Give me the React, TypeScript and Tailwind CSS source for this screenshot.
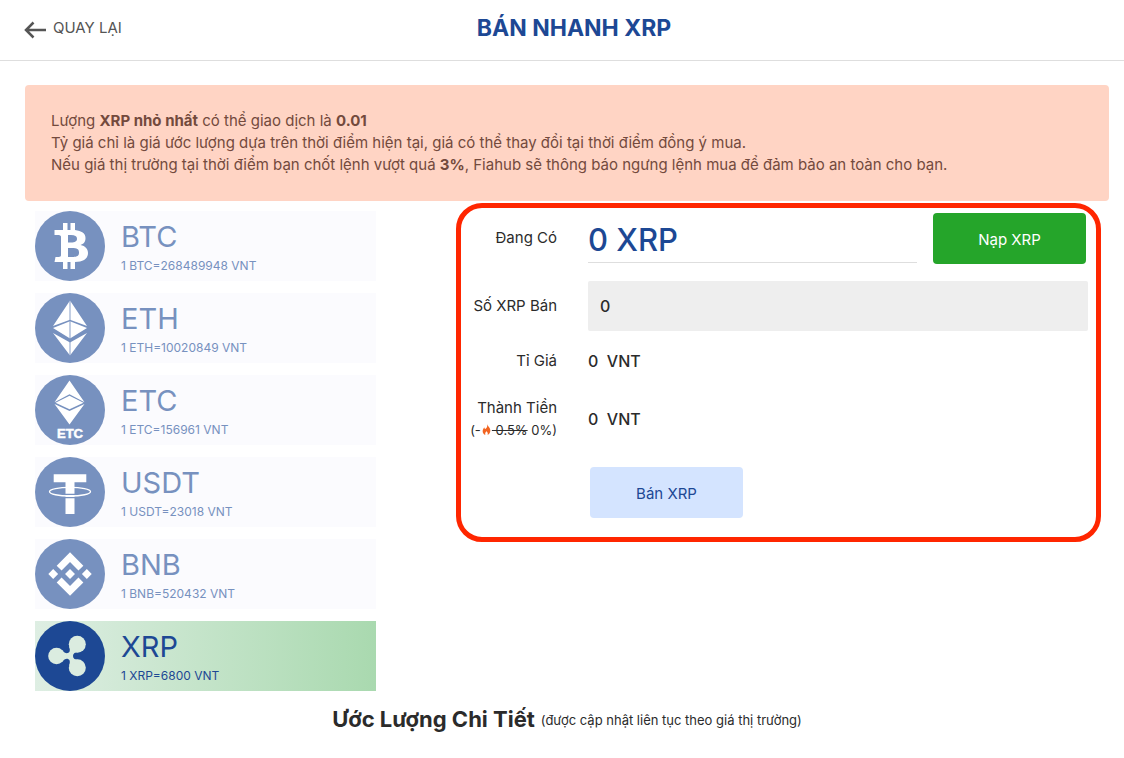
import type { ReactNode } from "react";

const coins = [
  { symbol: "BTC", rate: "1 BTC=268489948 VNT" },
  { symbol: "ETH", rate: "1 ETH=10020849 VNT" },
  { symbol: "ETC", rate: "1 ETC=156961 VNT" },
  { symbol: "USDT", rate: "1 USDT=23018 VNT" },
  { symbol: "BNB", rate: "1 BNB=520432 VNT" },
  { symbol: "XRP", rate: "1 XRP=6800 VNT" },
];

const glyphs: Record<string, ReactNode> = {
  BTC: (
    <path
      fill="#fff"
      fillRule="evenodd"
      d="M28 12h4.500v7h3v-7h4.500v7c6.500 1 10.500 3 10.500 8 0 4-2 6-5 7 5 1 7.500 4 7.500 8 0 6-5 9-13 9v7h-4.500v-7h-3v7H28v-7h-8.500l1-5h3c2 0 2.500-1 2.500-2V26c0-1-.5-2-2.500-2h-4v-5H28zM33 24v7.500h3c4 0 6-1 6-3.700S40 24 36 24zM33 37v9h4c5 0 7-1 7-4.500S42 37 37 37z"
    />
  ),
  ETH: (
    <>
      <path fill="#fff" d="M35 7.500 52 33 35 26.800 18 33zM35 28.200 52 35 35 45.500 18 35zM18 40l17 9.500L52 40 35 62.500z" />
      <path stroke="#7791bf" strokeWidth="1.500" strokeOpacity=".6" d="M35 7v56" />
    </>
  ),
  ETC: (
    <>
      <path fill="#fff" d="M34.500 5.500 49.500 27.300 34.500 19.300 19.500 27.300zM34.500 20.800 48.500 27.800 34.500 34.300 20.500 27.800zM19.500 29l15 7 15-7-15 20.500z" />
      <text
        x="35"
        y="63"
        textAnchor="middle"
        fill="#fff"
        stroke="#fff"
        strokeWidth=".5"
        className="font-['Liberation_Sans',sans-serif] text-[13px] font-bold"
      >
        ETC
      </text>
    </>
  ),
  USDT: (
    <>
      <path fill="#fff" d="M18.700 17.300h32.600v8H39.500V57h-9V25.300H18.700z" />
      <path stroke="#7791bf" strokeWidth="1.200" fill="none" d="M30 40.700h10M30 37.300h10" />
      <ellipse cx="35" cy="34.700" rx="20.500" ry="4.300" fill="none" stroke="#fff" strokeWidth="1.300" />
    </>
  ),
  BNB: (
    <path
      fill="#fff"
      transform="translate(13.300 13.300) scale(.343)"
      d="M38.730 53.200l24.590-24.580 24.600 24.600 14.300-14.310L63.320 0 24.420 38.900zM0 63.310l14.300-14.310 14.310 14.310-14.310 14.300zM38.730 73.410l24.590 24.590 24.600-24.600 14.310 14.290-38.900 38.910-38.910-38.880zM98 63.310l14.300-14.310 14.310 14.300-14.310 14.320zM77.830 63.300L63.320 48.780 48.820 63.290 63.320 77.800z"
    />
  ),
  XRP: (
    <g fill="#dbece0">
      <circle cx="21.500" cy="35" r="8.300" />
      <circle cx="42.300" cy="23.300" r="8.500" />
      <circle cx="42.300" cy="46.700" r="8.500" />
      <path d="M27 29c2 3 4.500 3.500 6 3 2.500-1 2-4 1-7l10 6c-4 0-6 1.500-6 4s2 4 6 4l-10 6c1-3 1.500-6-1-7-1.500-.5-4 0-6 3z" />
    </g>
  ),
};

function CoinIcon({ symbol, active }: { symbol: string; active: boolean }) {
  return (
    <svg viewBox="0 0 70 70" className="size-[70px] shrink-0" aria-hidden="true">
      <circle cx="35" cy="35" r="35" fill={active ? "#1d4894" : "#7791bf"} />
      {glyphs[symbol]}
    </svg>
  );
}

function CoinList() {
  return (
    <ul className="flex flex-col gap-3 pt-[10px]">
      {coins.map((coin) => {
        const active = coin.symbol === "XRP";
        return (
          <li key={coin.symbol}>
            <button
              type="button"
              className={`flex h-[70px] w-full text-left ${
                active
                  ? "bg-linear-to-r from-[#deeee3] to-[#a9d9af] text-[#1d4894]"
                  : "bg-[#fbfbfe] text-[#7791bf]"
              }`}
            >
              <CoinIcon symbol={coin.symbol} active={active} />
              <span className="flex flex-col pt-2 pl-4">
                <span className="text-[29px] leading-9">{coin.symbol}</span>
                <span className="text-xs leading-[22px]">{coin.rate}</span>
              </span>
            </button>
          </li>
        );
      })}
    </ul>
  );
}

function SellForm() {
  return (
    <form className="mt-[2px] self-start rounded-[26px] border-5 border-[#ff2600] pt-[5px] pr-2 pb-[19px] text-[15px]">
      <div className="grid grid-cols-[96px_1fr] items-center gap-x-[31px] gap-y-[17px] text-right">
        <span>Đang Có</span>
        <div className="flex items-start justify-between gap-4 pr-[2px] text-left">
          <div className="flex-1 border-b border-[#dedede] pt-1 text-[31px] leading-[45px] font-medium text-[#1d4894]">
            0 XRP
          </div>
          <button type="button" className="h-[51px] w-[153px] rounded bg-[#25a52a] pt-1 text-white">
            Nạp XRP
          </button>
        </div>

        <label htmlFor="amount">Số XRP Bán</label>
        <input
          id="amount"
          defaultValue="0"
          className="h-[50px] w-full rounded-[2px] bg-[#eee] px-3 text-base font-medium"
        />

        <span>Tỉ Giá</span>
        <span className="text-left text-base leading-[26px] font-medium whitespace-pre">0  VNT</span>

        <div className="flex h-14 flex-col justify-center leading-[23px] whitespace-nowrap">
          <span>Thành Tiền</span>
          <span className="text-[13px] leading-[23px]">
            (-
            <svg viewBox="0 0 16 20" className="mx-[1px] mb-1 inline h-[11px] w-[9px]" fill="#f26522" aria-hidden="true">
              <path d="M9 0c1 4 6 6 6 12 0 4-2 7-5 8 1-3 0-5-2-7-2 2-3 4-2 7-3-1-5-4-5-7 0-3 2-5 3-7 0 2 1 3 2 3 3-2 4-5 3-9z" />
            </svg>
            <s> 0.5%</s> 0%)
          </span>
        </div>
        <span className="text-left text-base font-medium whitespace-pre">0  VNT</span>
      </div>
      <button
        type="submit"
        className="mt-5 ml-[129px] block h-[51px] w-[153px] rounded bg-[#d4e4ff] pt-1 text-[#1d4894]"
      >
        Bán XRP
      </button>
    </form>
  );
}

export default function App() {
  return (
    <div className="bg-white font-['Inter',sans-serif] text-[#2b2b2b]">
      <header className="relative flex h-[61px] items-center justify-center border-b border-[#dedede] pb-1 pl-6">
        <a href="#" className="absolute left-6 flex items-center gap-[7px] text-[15px] text-[#555]">
          <svg viewBox="0 0 22 18" className="mt-1 h-[18px] w-[22px]" fill="none" stroke="#555" strokeWidth="2.500" aria-hidden="true">
            <path d="M22 9H2M9.500 1.500 2 9l7.500 7.500" />
          </svg>
          QUAY LẠI
        </a>
        <h1 className="text-[23px] font-bold text-[#1d4894]">BÁN NHANH XRP</h1>
      </header>

      <main className="pt-6 pr-[15px] pb-6 pl-[25px]">
        <div className="rounded bg-[#ffd4c4] px-[26px] py-[25px] text-[15px] leading-[22px] text-[#734a3d]">
          <p>
            Lượng <b>XRP nhỏ nhất</b> có thể giao dịch là <b>0.01</b>
          </p>
          <p>Tỷ giá chỉ là giá ước lượng dựa trên thời điểm hiện tại, giá có thể thay đổi tại thời điểm đồng ý mua.</p>
          <p>
            Nếu giá thị trường tại thời điểm bạn chốt lệnh vượt quá <b>3%</b>, Fiahub sẽ thông báo ngưng lệnh mua để
            đảm bảo an toàn cho bạn.
          </p>
        </div>

        <div className="grid grid-cols-[341fr_645fr] gap-20 pr-2 pl-[10px]">
          <CoinList />
          <SellForm />
        </div>

        <h2 className="mt-[11px] flex items-center justify-center gap-[6px] text-[22px] leading-8 font-bold">
          Ước Lượng Chi Tiết
          <small className="pt-[2px] text-[13px] font-normal">(được cập nhật liên tục theo giá thị trường)</small>
        </h2>
      </main>
    </div>
  );
}
